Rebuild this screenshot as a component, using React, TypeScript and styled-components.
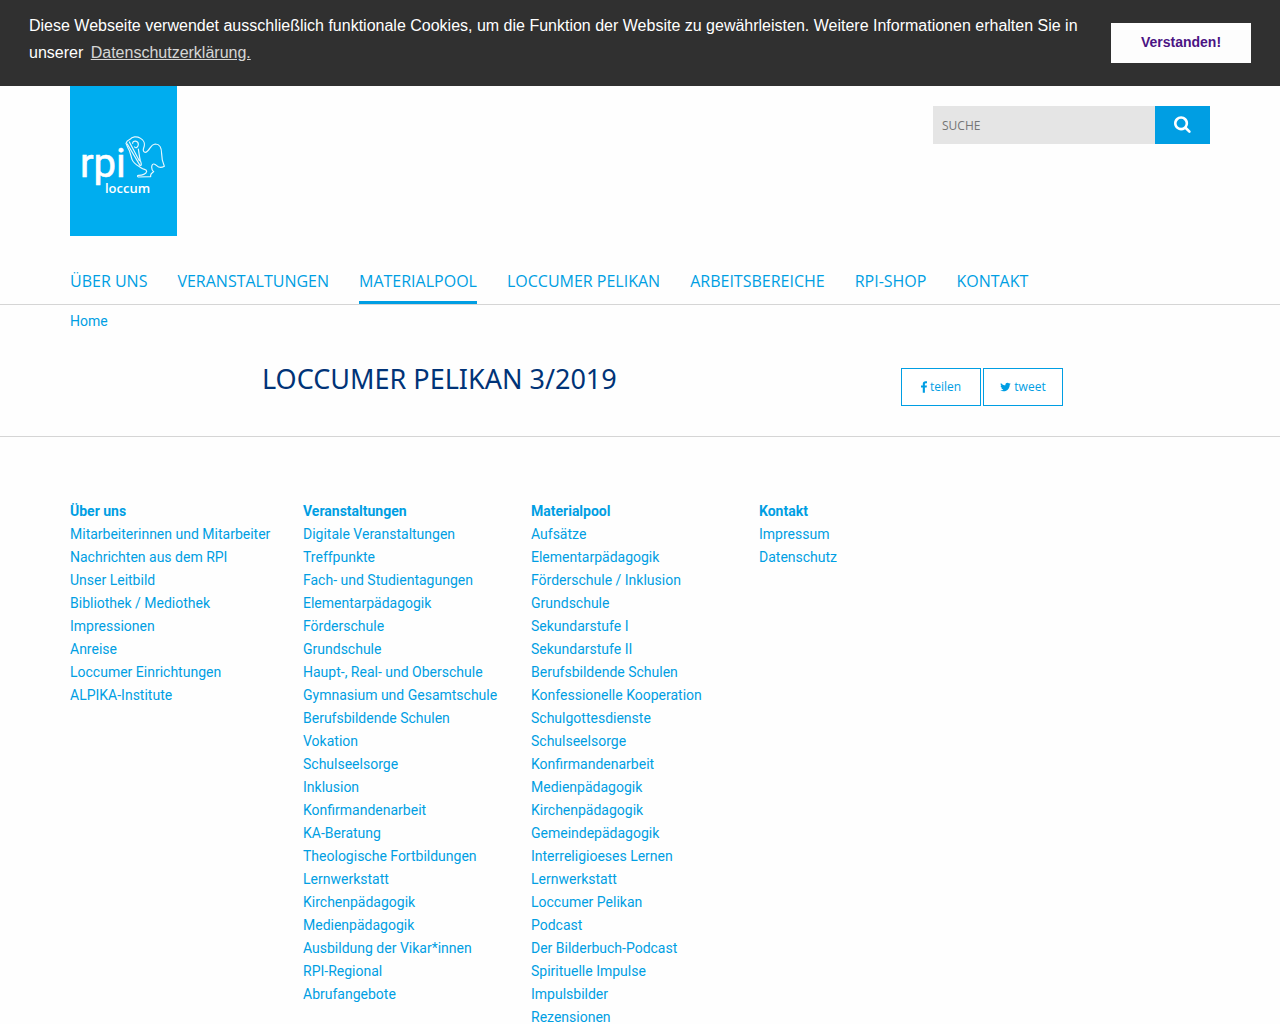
import React from 'react';
import styled, { createGlobalStyle } from 'styled-components';

const sky = '#009ee3';
const line = '#d5d5d5';

const GlobalStyle = createGlobalStyle`
  *, *::before, *::after { box-sizing: border-box; }
  body {
    margin: 0;
    background: #fefefe;
    color: ${sky};
    font: 14px/23px Roboto, sans-serif;
  }
  a { color: inherit; text-decoration: none; }
`;

const CookieBar = styled.section`
  display: flex;
  align-items: center;
  gap: 16px;
  min-height: 86px;
  padding: 11px 29px 20px;
  background: #303030;
  color: #fff;
  font: 16px/27px "Liberation Sans", sans-serif;
`;

const CookieText = styled.p`
  flex: 1;
  margin: 0;
`;

const CookieLink = styled.a`
  margin: 0 3px;
  text-decoration: underline;
  opacity: 0.8;
`;

const AcceptButton = styled.button`
  width: 140px;
  height: 40px;
  margin-top: 9px;
  padding: 0 0 3px;
  border: 0;
  background: #fdfdfd;
  color: #4b1483;
  font: bold 14px/20px "Liberation Sans", sans-serif;
`;

const Container = styled.div`
  width: 100%;
  max-width: 1280px;
  margin: 0 auto;
  padding: 0 70px;
`;

const Masthead = styled(Container)`
  display: flex;
  align-items: flex-start;
  justify-content: space-between;
`;

const LogoLink = styled.a`
  display: block;
  height: 150px;
  background: #00adef;
`;

const SearchForm = styled.form`
  display: flex;
  width: 277px;
  height: 38px;
  margin-top: 20px;
`;

const SearchInput = styled.input`
  flex: 1;
  min-width: 0;
  padding: 0 9px;
  border: 0;
  border-radius: 0;
  background: #e5e5e5;
  font: 12px "Open Sans", sans-serif;
  &::placeholder { color: #757575; opacity: 1; }
`;

const SearchButton = styled.button`
  display: grid;
  place-items: center;
  width: 55px;
  padding: 0 0 2px;
  border: 0;
  background: ${sky};
  color: #fff;
`;

const NavBar = styled.nav`
  margin-top: 30px;
  border-bottom: 1px solid ${line};
`;

const NavList = styled(Container).attrs({ as: 'ul' })`
  display: flex;
  gap: 30px;
  list-style: none;
`;

const NavLink = styled.a<{ $active?: boolean }>`
  display: block;
  height: 38px;
  border-bottom: 3px solid ${(p) => (p.$active ? sky : 'transparent')};
  font: 16px/30px "Open Sans", sans-serif;
  white-space: nowrap;
`;

const Breadcrumb = styled(Container).attrs({ as: 'nav' })`
  padding-top: 5px;
`;

const TitleRow = styled.div`
  display: flex;
  align-items: flex-start;
  justify-content: space-between;
  width: 100%;
  max-width: 1280px;
  margin: 0 auto;
  padding: 35px 217px 30px 262px;
`;

const Title = styled.h1`
  margin: 0;
  color: #003377;
  font: 27px/22px "Noto Sans", sans-serif;
`;

const ShareGroup = styled.div`
  display: flex;
  gap: 2px;
`;

const ShareLink = styled.a`
  display: flex;
  align-items: center;
  justify-content: center;
  gap: 3px;
  width: 80px;
  height: 38px;
  border: 1px solid ${sky};
  background: #fff;
  font: 12px/18px "Open Sans", sans-serif;
`;

const Footer = styled.footer`
  border-top: 1px solid ${line};
`;

const FooterGrid = styled(Container)`
  display: grid;
  grid-template-columns: 233px 228px 228px 1fr;
  padding-top: 63px;
`;

const LinkList = styled.ul`
  margin: 0;
  padding: 0;
  list-style: none;
  white-space: nowrap;
`;

const FooterHeading = styled.a`
  font-weight: 700;
`;

const navItems = ['Über uns', 'Veranstaltungen', 'Materialpool', 'Loccumer Pelikan', 'Arbeitsbereiche', 'RPI-Shop', 'Kontakt'];

const footerColumns = [
  {
    title: 'Über uns',
    links: ['Mitarbeiterinnen und Mitarbeiter', 'Nachrichten aus dem RPI', 'Unser Leitbild', 'Bibliothek / Mediothek', 'Impressionen', 'Anreise', 'Loccumer Einrichtungen', 'ALPIKA-Institute'],
  },
  {
    title: 'Veranstaltungen',
    links: ['Digitale Veranstaltungen', 'Treffpunkte', 'Fach- und Studientagungen', 'Elementarpädagogik', 'Förderschule', 'Grundschule', 'Haupt-, Real- und Oberschule', 'Gymnasium und Gesamtschule', 'Berufsbildende Schulen', 'Vokation', 'Schulseelsorge', 'Inklusion', 'Konfirmandenarbeit', 'KA-Beratung', 'Theologische Fortbildungen', 'Lernwerkstatt', 'Kirchenpädagogik', 'Medienpädagogik', 'Ausbildung der Vikar*innen', 'RPI-Regional', 'Abrufangebote'],
  },
  {
    title: 'Materialpool',
    links: ['Aufsätze', 'Elementarpädagogik', 'Förderschule / Inklusion', 'Grundschule', 'Sekundarstufe I', 'Sekundarstufe II', 'Berufsbildende Schulen', 'Konfessionelle Kooperation', 'Schulgottesdienste', 'Schulseelsorge', 'Konfirmandenarbeit', 'Medienpädagogik', 'Kirchenpädagogik', 'Gemeindepädagogik', 'Interreligioeses Lernen', 'Lernwerkstatt', 'Loccumer Pelikan', 'Podcast', 'Der Bilderbuch-Podcast', 'Spirituelle Impulse', 'Impulsbilder', 'Rezensionen'],
  },
  { title: 'Kontakt', links: ['Impressum', 'Datenschutz'] },
];

function Logo() {
  return (
    <svg width="107" height="150" viewBox="0 0 107 150" role="img" aria-label="rpi loccum">
      <g fill="#fff">
        <text x="10" y="91" fontFamily="Roboto, sans-serif" fontSize="40" stroke="#fff" strokeWidth="0.6">rpi</text>
        <text x="35" y="107" fontFamily="'Open Sans', sans-serif" fontSize="13" fontWeight="600">loccum</text>
      </g>
      <g transform="translate(60 44) scale(0.3333)" fill="none" stroke="#fff" strokeWidth="3.6" strokeLinejoin="round" strokeLinecap="round" opacity="0.9">
        <path d="M-12 40 C-10 32 -4 30 0 28 C6 20 20 18 30 24 C42 30 46 42 41 54 C37 66 46 72 54 62 C61 54 64 43 76 42 C90 42 95 56 95 72 C95 90 99 100 103 109 C94 114 86 113 80 107 C74 101 68 100 66 106 C64 114 67 122 71 125 C67 130 60 130 62 140 L25 141 C22 140 21 136 26 136 C36 136 49 132 50 124 C50 117 42 120 34 114 C22 106 10 100 6 88 C2 76 1 64 -6 54 Z" />
        <path d="M-8 42 L30 106 C36 108 34 100 31 92 C28 80 27 68 25 57 M-2 36 L28 92 M8 40 C8 30 25 31 25 43 C25 50 18 57 14 51" />
      </g>
    </svg>
  );
}

function SearchIcon() {
  return (
    <svg width="18" height="18" viewBox="0 0 1792 1792" fill="currentColor" aria-hidden="true">
      <path d="M1152 832q0-185-131.5-316.5t-316.5-131.5-316.5 131.5-131.5 316.5 131.5 316.5 316.5 131.5 316.5-131.5 131.5-316.5zm512 832q0 52-38 90t-90 38q-54 0-90-38l-343-342q-179 124-399 124-143 0-273.5-55.5t-225-150-150-225-55.5-273.5 55.5-273.5 150-225 225-150 273.5-55.5 273.5 55.5 225 150 150 225 55.5 273.5q0 220-124 399l343 343q37 37 37 90z" />
    </svg>
  );
}

function FacebookIcon() {
  return (
    <svg width="6" height="12" viewBox="479 0 864 1664" fill="currentColor" aria-hidden="true">
      <path d="M1343 12v264h-157q-86 0-116 36t-30 108v189h293l-39 296h-254v759h-306v-759h-255v-296h255v-218q0-186 104-288.5t277-102.5q147 0 228 12z" />
    </svg>
  );
}

function TwitterIcon() {
  return (
    <svg width="11" height="12" viewBox="108 0 1576 1792" fill="currentColor" aria-hidden="true">
      <path d="M1684 408q-67 98-162 167 1 14 1 42 0 130-38 259.5t-115.5 248.5-184.5 210.5-258 146-323 54.5q-271 0-496-145 35 4 78 4 225 0 401-138-105-2-188-64.5t-114-159.5q33 5 61 5 43 0 85-11-112-23-185.5-111.5t-73.5-205.5v-4q68 38 146 41-66-44-105-115t-39-154q0-88 44-163 121 149 294.5 238.5t371.5 99.5q-8-38-8-74 0-134 94.5-228.5t228.5-94.5q140 0 236 102 109-21 205-78-37 115-142 178 93-10 186-50z" />
    </svg>
  );
}

export default function App() {
  return (
    <>
      <GlobalStyle />
      <CookieBar aria-label="Cookie-Hinweis">
        <CookieText>
          Diese Webseite verwendet ausschließlich funktionale Cookies, um die Funktion der Website zu gewährleisten. Weitere Informationen erhalten Sie in unserer{' '}
          <CookieLink href="#datenschutz">Datenschutzerklärung.</CookieLink>
        </CookieText>
        <AcceptButton type="button">Verstanden!</AcceptButton>
      </CookieBar>
      <header>
        <Masthead>
          <LogoLink href="#home"><Logo /></LogoLink>
          <SearchForm role="search" onSubmit={(e) => e.preventDefault()}>
            <SearchInput type="search" aria-label="Suche" placeholder="SUCHE" />
            <SearchButton type="submit" aria-label="Suchen"><SearchIcon /></SearchButton>
          </SearchForm>
        </Masthead>
        <NavBar>
          <NavList>
            {navItems.map((item) => (
              <li key={item}>
                <NavLink href="#nav" $active={item === 'Materialpool'}>{item.toUpperCase()}</NavLink>
              </li>
            ))}
          </NavList>
        </NavBar>
      </header>
      <Breadcrumb><a href="#home">Home</a></Breadcrumb>
      <main>
        <TitleRow>
          <Title>LOCCUMER PELIKAN 3/2019</Title>
          <ShareGroup>
            <ShareLink href="#teilen"><FacebookIcon />teilen</ShareLink>
            <ShareLink href="#tweet"><TwitterIcon />tweet</ShareLink>
          </ShareGroup>
        </TitleRow>
      </main>
      <Footer>
        <FooterGrid>
          {footerColumns.map((column) => (
            <LinkList key={column.title}>
              <li><FooterHeading href="#bereich">{column.title}</FooterHeading></li>
              {column.links.map((link) => (
                <li key={link}><a href="#seite">{link}</a></li>
              ))}
            </LinkList>
          ))}
        </FooterGrid>
      </Footer>
    </>
  );
}
